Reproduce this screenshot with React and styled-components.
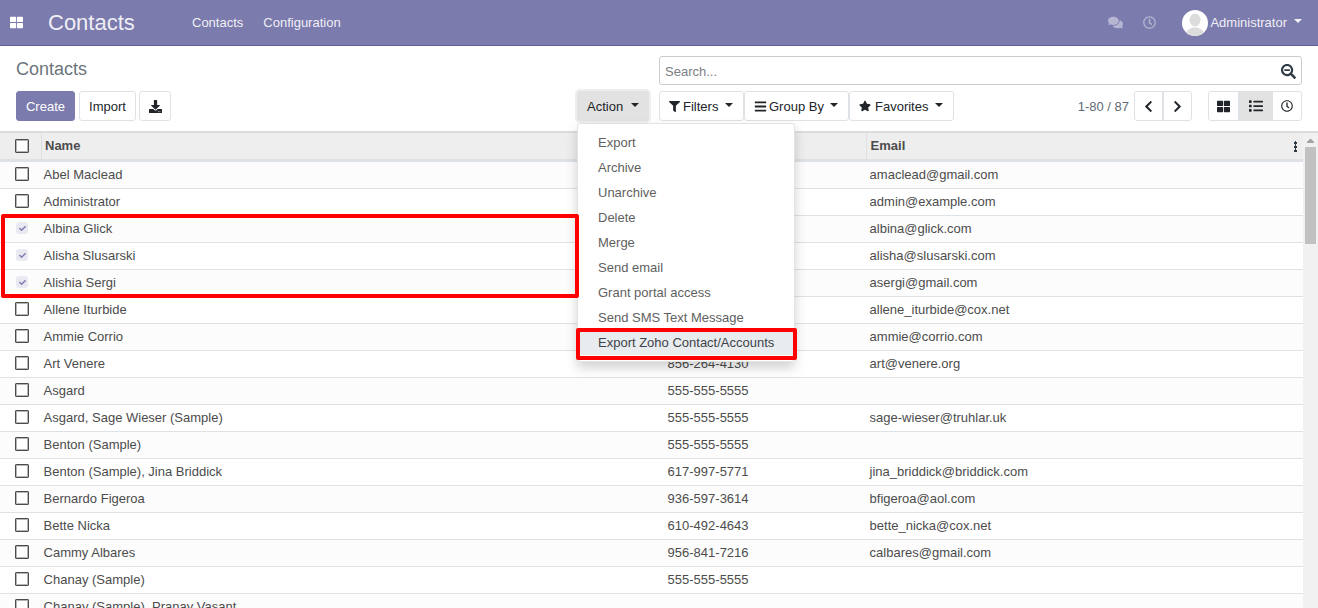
import React from 'react';
import styled, { createGlobalStyle } from 'styled-components';
import {
  FaThLarge, FaComments, FaRegClock, FaDownload, FaFilter, FaBars, FaStar,
  FaSearchMinus, FaChevronLeft, FaChevronRight, FaList, FaCheck, FaCaretUp,
} from 'react-icons/fa';

const GlobalStyle = createGlobalStyle`
  html, body {
    margin: 0;
    height: 100%;
    overflow: hidden;
    background: #fff;
    font-family: "Liberation Sans", Arial, sans-serif;
    font-size: 13px;
    color: #4c4c4c;
  }
`;

const Page = styled.div`
  height: 608px;
  display: flex;
  flex-direction: column;
  overflow: hidden;
`;

const Navbar = styled.header`
  height: 45px;
  flex: none;
  display: flex;
  align-items: center;
  background: #7c7bad;
  border-bottom: 1px solid #5f5e97;
  color: rgba(255, 255, 255, 0.9);
`;

const AppsToggle = styled.span`
  width: 48px;
  padding-left: 10px;
  box-sizing: border-box;
  display: flex;
  font-size: 13px;
  color: #fff;
`;

const Brand = styled.span`
  width: 144px;
  font-size: 22px;
  line-height: 45px;
`;

const NavLink = styled.span`
  margin-right: 20px;
`;

const NavRight = styled.div`
  margin-left: auto;
  padding-right: 16px;
  display: flex;
  align-items: center;
`;

const NavIcon = styled.span`
  display: flex;
  font-size: ${props => props.size}px;
  margin-right: ${props => props.gap}px;
  margin-bottom: 1px;
  color: rgba(255, 255, 255, 0.45);
`;

const Avatar = styled.svg`
  width: 26px;
  height: 26px;
  border-radius: 50%;
  margin-right: 2px;
`;

const Caret = styled.span`
  display: inline-block;
  margin-left: ${props => props.gap || 7}px;
  margin-bottom: 3px;
  border-top: 4px solid currentColor;
  border-left: 4px solid transparent;
  border-right: 4px solid transparent;
`;

const ControlPanel = styled.section`
  flex: none;
  height: 85px;
  box-sizing: border-box;
  padding: 10px 16px 0;
  display: grid;
  grid-template-columns: 1fr 643px;
  grid-template-rows: 29px 30px;
  column-gap: 10px;
  row-gap: 6px;
`;

const Breadcrumb = styled.div`
  font-size: 18px;
  line-height: 26px;
  color: #6c757d;
`;

const SearchBox = styled.div`
  border: 1px solid #ccc;
  border-radius: 3px;
  display: flex;
  align-items: center;
  justify-content: space-between;
  padding: 0 5px;
  color: #7a8086;
`;

const SearchLabel = styled.span`
  padding-top: 2px;
`;

const SearchIcon = styled.span`
  display: flex;
  font-size: 15px;
  padding-top: 1px;
  color: #2f3b45;
`;

const ButtonRow = styled.div`
  display: flex;
  align-items: stretch;
`;

const Button = styled.button`
  height: 30px;
  box-sizing: border-box;
  width: ${props => props.width}px;
  margin: ${props => props.margin || 0};
  padding: 0;
  font: inherit;
  color: #212529;
  background: ${props => props.active ? '#e2e2e2' : '#fff'};
  border: 1px solid #dee2e6;
  border-radius: ${props => props.radius || '3px'};
  display: flex;
  align-items: center;
  justify-content: center;
  gap: 4px;

  svg { font-size: ${props => props.iconSize || 13}px; }
`;

const DropdownButton = styled(Button)`
  justify-content: flex-start;
  padding-left: 9px;
  gap: ${props => props.spacing || 4}px;
`;

const CreateButton = styled(Button)`
  background: #7c7bad;
  border-color: #7c7bad;
  color: #fff;
`;

const ActionWrap = styled.div`
  position: relative;
  margin-left: auto;
`;

const ActionButton = styled(DropdownButton)`
  background: #e2e2e2;
  border-color: #e2e2e2;
  box-shadow: 0 0 0 2px #eeeeee;
`;

const Menu = styled.div`
  position: absolute;
  z-index: 5;
  top: 32px;
  left: 0;
  width: 218px;
  box-sizing: border-box;
  padding: 6px 0;
  background: #fff;
  border: 1px solid #e3e3e3;
  border-radius: 3px;
  box-shadow: 0 6px 12px rgba(0, 0, 0, 0.18);
`;

const MenuItem = styled.div`
  height: 25px;
  line-height: 25px;
  padding-left: 20px;
  color: ${props => props.active ? '#3d4349' : '#5f5f5f'};
  background: ${props => props.active ? '#e9ecef' : 'transparent'};
  position: relative;
`;

const MenuHighlight = styled.span`
  position: absolute;
  top: -2px;
  bottom: -5px;
  left: -2px;
  right: -3px;
  border: 4px solid #f00;
  border-radius: 2px;
`;

const Pager = styled.div`
  margin-left: auto;
  display: flex;
  align-items: center;
  color: #5f6a74;
`;

const PagerText = styled.span`
  margin-right: 5px;
`;

const Group = styled.div`
  display: flex;
  margin-right: ${props => props.gap || 0}px;
`;

const TableArea = styled.main`
  flex: 1;
  min-height: 0;
  display: flex;
  position: relative;
`;

const ListView = styled.div`
  flex: 1;
  min-width: 0;
`;

const Scrollbar = styled.div`
  width: 15px;
  flex: none;
  background: #f1f1f1;
  display: flex;
  flex-direction: column;
  align-items: center;
  border-top: 2px solid #dcdcdc;
`;

const ArrowUp = styled.span`
  height: 14px;
  display: flex;
  align-items: center;
  font-size: 13px;
  color: #a3a3a3;
`;

const Thumb = styled.div`
  width: 11px;
  height: 97px;
  background: #c1c1c1;
`;

const columns = '41px 622px 203px 1fr';

const HeaderRow = styled.div`
  display: grid;
  grid-template-columns: ${columns};
  height: 26px;
  background: #eeeeee;
  border-top: 2px solid #dcdcdc;
  border-bottom: 3px solid #dee2e6;
  font-weight: bold;
  position: relative;
`;

const HeaderCell = styled.div`
  display: flex;
  align-items: center;
  padding-left: ${props => props.pad}px;
  padding-bottom: 1px;
  border-left: 1px solid #dfdfdf;
`;

const OptionalToggle = styled.span`
  position: absolute;
  right: 6px;
  top: 8px;
  width: 3px;
  height: 11px;
  background: radial-gradient(circle at center, #2f3b45 1.5px, transparent 1.7px) 0 0 / 3px 4px;
`;

const Row = styled.div`
  display: grid;
  grid-template-columns: ${columns};
  height: 27px;
  box-sizing: border-box;
  padding-bottom: 2px;
  align-items: center;
  background: ${props => props.striped ? '#fcfcfc' : '#fff'};
  border-bottom: 1px solid #dee2e6;
`;

const CheckCell = styled.div`
  display: flex;
  align-items: center;
  padding-left: 15px;
`;

const Checkbox = styled.span`
  width: 14px;
  height: 14px;
  box-sizing: border-box;
  display: flex;
  align-items: center;
  justify-content: center;
  border: 1px solid #4c4c4c;
  border-radius: 1px;
  box-shadow: inset 0 0 0 1px #b5b5b5;
  background: #fff;
`;

const CheckedBox = styled.span`
  width: 12px;
  height: 12px;
  margin-left: 1px;
  display: flex;
  align-items: center;
  justify-content: center;
  border-radius: 3px;
  background: #e9e9f2;
  color: #7c7bad;
  font-size: 7px;
`;

const Cell = styled.div`
  padding-left: ${props => props.pad}px;
  white-space: nowrap;
`;

const SelectionFrame = styled.div`
  position: absolute;
  z-index: 6;
  left: 1px;
  top: 83px;
  width: 578px;
  height: 84px;
  box-sizing: border-box;
  border: 4px solid #f00;
  border-radius: 2px;
`;

const AvatarIcon = () => (
  <Avatar viewBox="0 0 26 26">
    <rect width="26" height="26" fill="#fff" />
    <ellipse cx="13" cy="10" rx="5.5" ry="6.5" fill="#dcdcdc" />
    <path d="M3 26c1-6 5-7 7.5-8.5h5C18 19 22 20 23 26z" fill="#dcdcdc" />
  </Avatar>
);

const contacts = [
  ['Abel Maclead', '', 'amaclead@gmail.com'],
  ['Administrator', '', 'admin@example.com'],
  ['Albina Glick', '', 'albina@glick.com', true],
  ['Alisha Slusarski', '', 'alisha@slusarski.com', true],
  ['Alishia Sergi', '', 'asergi@gmail.com', true],
  ['Allene Iturbide', '', 'allene_iturbide@cox.net'],
  ['Ammie Corrio', '', 'ammie@corrio.com'],
  ['Art Venere', '856-264-4130', 'art@venere.org'],
  ['Asgard', '555-555-5555', ''],
  ['Asgard, Sage Wieser (Sample)', '555-555-5555', 'sage-wieser@truhlar.uk'],
  ['Benton (Sample)', '555-555-5555', ''],
  ['Benton (Sample), Jina Briddick', '617-997-5771', 'jina_briddick@briddick.com'],
  ['Bernardo Figeroa', '936-597-3614', 'bfigeroa@aol.com'],
  ['Bette Nicka', '610-492-4643', 'bette_nicka@cox.net'],
  ['Cammy Albares', '956-841-7216', 'calbares@gmail.com'],
  ['Chanay (Sample)', '555-555-5555', ''],
  ['Chanay (Sample), Pranay Vasant', '', ''],
];

const actions = [
  'Export', 'Archive', 'Unarchive', 'Delete', 'Merge', 'Send email',
  'Grant portal access', 'Send SMS Text Message',
];

export default function App() {
  return (
    <Page>
      <GlobalStyle />
      <Navbar>
        <AppsToggle><FaThLarge /></AppsToggle>
        <Brand>Contacts</Brand>
        <NavLink>Contacts</NavLink>
        <NavLink>Configuration</NavLink>
        <NavRight>
          <NavIcon size={15} gap={20}><FaComments /></NavIcon>
          <NavIcon size={13} gap={26}><FaRegClock /></NavIcon>
          <AvatarIcon />
          <span>Administrator</span>
          <Caret />
        </NavRight>
      </Navbar>

      <ControlPanel>
        <Breadcrumb>Contacts</Breadcrumb>
        <SearchBox>
          <SearchLabel>Search...</SearchLabel>
          <SearchIcon><FaSearchMinus /></SearchIcon>
        </SearchBox>
        <ButtonRow>
          <CreateButton width={59}>Create</CreateButton>
          <Button width={57} margin="0 0 0 4px">Import</Button>
          <Button width={32} margin="0 0 0 3px"><FaDownload /></Button>
          <ActionWrap>
            <ActionButton width={72}>Action<Caret gap={4} /></ActionButton>
            <Menu>
              {actions.map(label => <MenuItem key={label}>{label}</MenuItem>)}
              <MenuItem active>
                Export Zoho Contact/Accounts
                <MenuHighlight />
              </MenuItem>
            </Menu>
          </ActionWrap>
        </ButtonRow>
        <ButtonRow>
          <DropdownButton width={85} iconSize={11} spacing={3}><FaFilter />Filters<Caret gap={4} /></DropdownButton>
          <DropdownButton width={105} spacing={2}><FaBars />Group By<Caret gap={4} /></DropdownButton>
          <DropdownButton width={105} iconSize={12}><FaStar />Favorites<Caret gap={3} /></DropdownButton>
          <Pager>
            <PagerText>1-80 / 87</PagerText>
            <Group gap={16}>
              <Button width={29} radius="3px 0 0 3px"><FaChevronLeft /></Button>
              <Button width={29} radius="0 3px 3px 0"><FaChevronRight /></Button>
            </Group>
            <Group>
              <Button width={31} radius="3px 0 0 3px"><FaThLarge /></Button>
              <Button width={33} radius="0" active iconSize={14}><FaList /></Button>
              <Button width={30} radius="0 3px 3px 0" iconSize={12}><FaRegClock /></Button>
            </Group>
          </Pager>
        </ButtonRow>
      </ControlPanel>

      <TableArea>
        <ListView>
          <HeaderRow>
            <CheckCell><Checkbox /></CheckCell>
            <HeaderCell pad={3}>Name</HeaderCell>
            <HeaderCell />
            <HeaderCell pad={3.6}>Email</HeaderCell>
            <OptionalToggle />
          </HeaderRow>
          {contacts.map(([name, phone, email, checked], index) => (
            <Row key={name} striped={index % 2 === 0}>
              <CheckCell>
                {checked ? <CheckedBox><FaCheck /></CheckedBox> : <Checkbox />}
              </CheckCell>
              <Cell pad={2.6}>{name}</Cell>
              <Cell pad={4.6}>{phone}</Cell>
              <Cell pad={3.6}>{email}</Cell>
            </Row>
          ))}
        </ListView>
        <Scrollbar>
          <ArrowUp><FaCaretUp /></ArrowUp>
          <Thumb />
        </Scrollbar>
        <SelectionFrame />
      </TableArea>
    </Page>
  );
}
